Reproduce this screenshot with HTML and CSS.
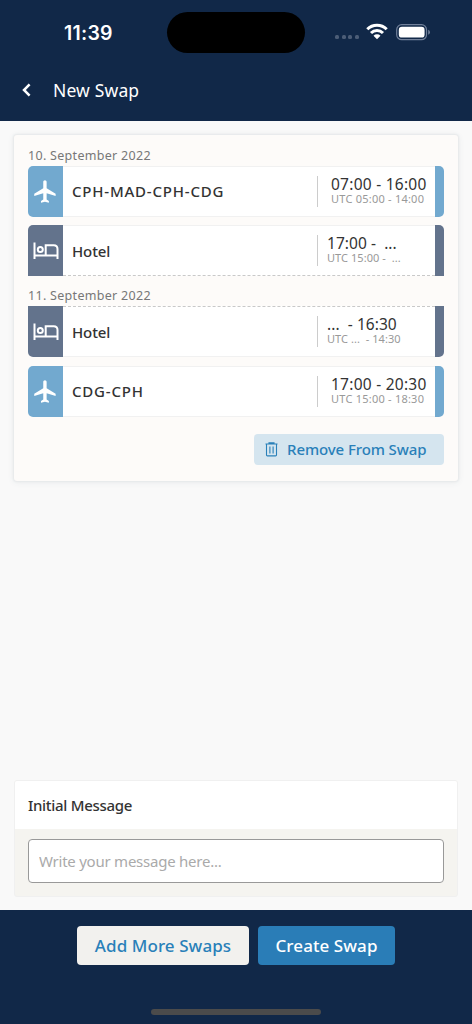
FILE: index.html
```html
<!DOCTYPE html>
<html lang="en">
<head>
<meta charset="utf-8">
<title>New Swap</title>
<link rel="stylesheet" href="styles.css">
</head>
<body>
<svg class="sprite" width="0" height="0">
  <symbol id="plane" viewBox="0 0 24 24"><path d="M21 16v-2l-8-5V3.5C13 2.67 12.33 2 11.5 2S10 2.67 10 3.5V9l-8 5v2l8-2.5V19l-2 1.5V22l3.5-1 3.5 1v-1.500L13 19v-5.500l8 2.500z"/></symbol>
  <symbol id="bed" viewBox="0 0 26 18"><path d="M1.500 .5v16.500M1.500 13.400h23M12.700 13.400V3.300h8q3.800 0 3.800 3.800V17" fill="none" stroke="currentColor" stroke-width="2"/><circle cx="7.300" cy="7.500" r="2.500" fill="none" stroke="currentColor" stroke-width="2"/></symbol>
</svg>
<div class="screen">
  <header class="header">
    <div class="status">
      <span class="clock">11:39</span>
      <span class="island"></span>
      <span class="dots"><i></i><i></i><i></i><i></i></span>
      <svg class="wifi" width="22" height="17" viewBox="0 0 22 17"><g fill="none" stroke="#fff" stroke-width="3"><path d="M1.300 6.200a13.700 13.700 0 0 1 19.400 0"/><path d="M5 10a8.500 8.500 0 0 1 12 0"/></g><path d="M11 16.300 7.500 12.800a5 5 0 0 1 7 0z" fill="#fff"/></svg>
      <svg class="battery" width="35" height="17" viewBox="0 0 35 17"><rect x=".7" y=".7" width="29.800" height="15" rx="5" fill="none" stroke="#71809a" stroke-width="1.200"/><rect x="2.800" y="2.800" width="25.800" height="10.800" rx="3.200" fill="#fff"/><path d="M32.200 5.700q1.800.7 1.800 2.500t-1.800 2.500z" fill="#71809a"/></svg>
    </div>
    <div class="nav">
      <svg width="10" height="14" viewBox="0 0 10 14"><path d="M7.600 1.300 2 7l5.600 5.700" fill="none" stroke="#fff" stroke-width="2.500"/></svg>
      <h1 class="title">New Swap</h1>
    </div>
  </header>
  <main class="content">
    <section class="card">
      <h2 class="date">10. September 2022</h2>
      <article class="row flight">
        <div class="tag"><svg class="plane"><use href="#plane"/></svg></div>
        <div class="body"><span class="name code">CPH-MAD-CPH-CDG</span>
          <div class="times"><span class="local">07:00 - 16:00</span><span class="utc">UTC 05:00 - 14:00</span></div></div>
        <div class="edge"></div>
      </article>
      <article class="row hotel continues">
        <div class="tag"><svg class="bed"><use href="#bed"/></svg></div>
        <div class="body"><span class="name">Hotel</span>
          <div class="times"><span class="local">17:00 -&nbsp; ...</span><span class="utc">UTC 15:00 -&nbsp; ...</span></div></div>
        <div class="edge"></div>
      </article>
      <h2 class="date second">11. September 2022</h2>
      <article class="row hotel continued">
        <div class="tag"><svg class="bed"><use href="#bed"/></svg></div>
        <div class="body"><span class="name">Hotel</span>
          <div class="times"><span class="local">...&nbsp; - 16:30</span><span class="utc">UTC ...&nbsp; - 14:30</span></div></div>
        <div class="edge"></div>
      </article>
      <article class="row flight">
        <div class="tag"><svg class="plane"><use href="#plane"/></svg></div>
        <div class="body"><span class="name code">CDG-CPH</span>
          <div class="times"><span class="local">17:00 - 20:30</span><span class="utc">UTC 15:00 - 18:30</span></div></div>
        <div class="edge"></div>
      </article>
      <button class="remove">
        <svg width="13" height="15" viewBox="0 0 13 15" fill="none" stroke="currentColor" stroke-width="1.100"><path d="M.5 2h12M4 1.900V.9h5v1M1.500 2.200v10.800q0 .9.900.9h8.200q.9 0 .9-.9V2.200M4.900 4.500v7M8.100 4.500v7"/></svg>
        <span>Remove From Swap</span>
      </button>
    </section>
    <section class="message">
      <h2 class="label">Initial Message</h2>
      <div class="field"><input class="input" placeholder="Write your message here..."></div>
    </section>
  </main>
  <footer class="footer">
    <div class="actions">
      <button class="btn light">Add More Swaps</button>
      <button class="btn primary">Create Swap</button>
    </div>
    <div class="home"></div>
  </footer>
</div>
</body>
</html>
```
FILE: styles.css
```css
* { box-sizing: border-box; }
body { margin: 0; font-family: "Noto Sans", "Open Sans", sans-serif; color: #333; }
h1, h2 { margin: 0; }
button, input { font-family: inherit; border: 0; margin: 0; padding: 0; }
.sprite { display: block; height: 0; }
.screen { width: 472px; height: 1024px; display: flex; flex-direction: column; background: #f9f9f9; overflow: hidden; }

.header { height: 121px; flex: none; background: #112848; color: #fff; }
.status { height: 65px; display: flex; align-items: flex-start; padding-left: 64px; }
.clock { width: 103px; padding-top: 21px; font: 600 19.500px/25px Inter, sans-serif; letter-spacing: .25px; }
.island { width: 138px; height: 41px; margin-top: 12px; border-radius: 21px; background: #000; }
.dots { display: flex; gap: 2.600px; margin: 35px 0 0 30px; }
.dots i { width: 4px; height: 4px; border-radius: 1.500px; background: #4c5d77; }
.wifi { margin: 23px 0 0 7.500px; }
.battery { margin: 24px 0 0 7.500px; }
.nav { height: 50px; padding-left: 22px; display: flex; align-items: center; }
.title { margin-left: 21px; font-size: 17.500px; font-weight: 450; letter-spacing: .15px; line-height: 24px; }

.content { height: 789px; padding: 14px 14px 13px; display: flex; flex-direction: column; justify-content: space-between; }
.card { height: 345.500px; padding: 10px 14px 0; background: #fdfbf9; border-radius: 3px; box-shadow: 0 0 2px 1px #e6e8e9, 0 1px 7px #e8ebec; display: flex; flex-direction: column; }
.date { height: 21px; font-size: 12.500px; line-height: 22px; font-weight: 430; letter-spacing: .3px; color: #777; }
.date.second { margin-top: 1px; }
.row { height: 51px; flex: none; margin-bottom: 8px; display: flex; border-radius: 5px; overflow: hidden; background: #fff; }
.row + .row { margin-top: .4px; }
.tag { width: 35px; display: flex; align-items: center; justify-content: center; color: #fff; }
.flight .tag, .flight .edge { background: #72a9cf; }
.hotel .tag, .hotel .edge { background: #63738c; }
.plane { width: 27px; height: 27px; fill: #fff; }
.bed { width: 26px; height: 18px; }
.edge { width: 9px; }
.body { flex: 1; display: flex; align-items: center; justify-content: space-between; padding-left: 9px; border-top: 1px solid #f1f1f1; border-bottom: 1px solid #f1f1f1; }
.continues { border-bottom-left-radius: 0; border-bottom-right-radius: 0; }
.continues .body { border-bottom: 1px dashed #c9c9c9; }
.continued { border-top-left-radius: 0; border-top-right-radius: 0; }
.continued .body { border-top: 1px dashed #c9c9c9; }
.name { padding-bottom: 1px; font-size: 15px; font-weight: 500; letter-spacing: -.1px; color: #333; }
.hotel .name { padding-bottom: 0; }
.name.code { letter-spacing: .8px; }
.times { width: 118px; height: 31px; border-left: 1px solid #ccc; padding-left: 9px; display: flex; flex-direction: column; }
.flight .times { padding-left: 13px; }
.local { font-size: 15.500px; line-height: 17px; letter-spacing: .05px; color: #333; white-space: pre; }
.utc { font-size: 11px; line-height: 12px; letter-spacing: .05px; color: #999; white-space: pre; }
.flight .local { letter-spacing: .25px; }
.flight .utc { letter-spacing: .23px; }
.remove { align-self: flex-end; width: 190px; height: 31px; margin-top: 9px; padding-left: 11px; display: flex; align-items: center; gap: 9px; border-radius: 4px; background: #d5e5ef; color: #2980b9; font-size: 15px; font-weight: 500; letter-spacing: -.1px; }

.message { height: 117px; border: 1px solid #f0f0f0; border-radius: 3px; background: #f5f4f0; overflow: hidden; }
.label { height: 48px; padding-left: 13px; background: #fff; font-size: 15px; font-weight: 500; letter-spacing: -.3px; line-height: 49px; color: #333; }
.field { padding: 10px 13px; }
.input { display: block; width: 100%; height: 44px; border: 1px solid #999; border-radius: 4px; padding: 0 10px; background: #fff; font-size: 15px; letter-spacing: -.24px; }
.input::placeholder { color: #aaa; opacity: 1; }

.footer { flex: 1; background: #112848; display: flex; flex-direction: column; align-items: center; justify-content: space-between; padding: 16px 0 9px; }
.actions { display: flex; gap: 9px; }
.btn { height: 39px; border-radius: 4px; font-size: 17px; font-weight: 500; letter-spacing: .08px; }
.light { width: 172px; background: #f2f1ee; color: #2980b9; }
.primary { width: 137px; background: #2a7db7; color: #fff; }
.home { width: 170px; height: 6px; border-radius: 3px; background: #4b4b4b; }
```
